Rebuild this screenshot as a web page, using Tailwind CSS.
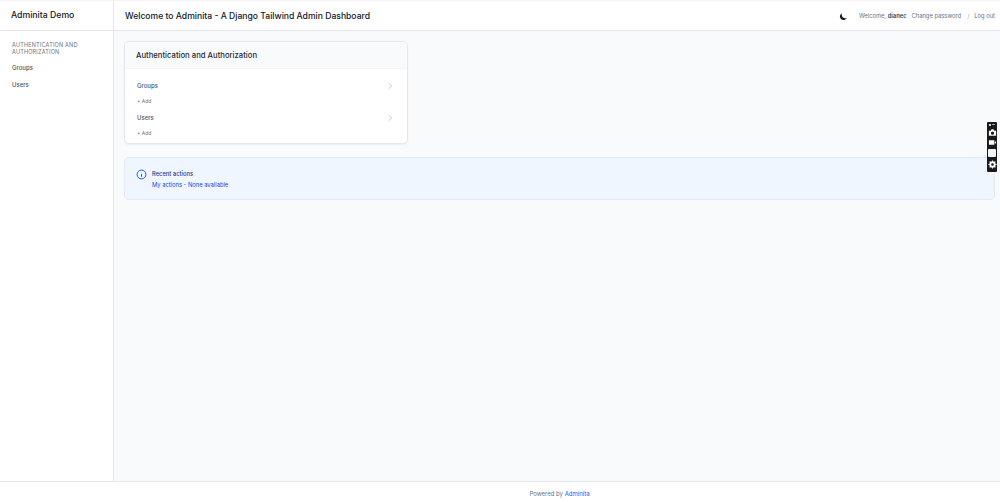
<!DOCTYPE html>
<html lang="en">
<head>
    <meta charset="UTF-8">
    <meta name="viewport" content="width=device-width, initial-scale=1.0">
    <title>Adminita Demo</title>
    <script src="https://cdn.jsdelivr.net/npm/@tailwindcss/browser@4"></script>
</head>
<body class="bg-white text-gray-800 font-['Inter',sans-serif] overflow-hidden">
    <div class="relative flex h-[502px] w-[1000px] flex-col border-t border-gray-100">
        <div class="flex min-h-0 flex-1">
            <aside class="w-[114px] shrink-0 border-r border-gray-200 bg-white">
                <div class="flex h-[30px] items-center border-b border-gray-200 pl-[11px] pt-[1px] text-[8.7px] font-medium text-gray-900">Adminita Demo</div>
                <nav class="pt-[11px] pl-[12px] pr-2">
                    <h3 class="text-[5.5px] leading-[7px] tracking-[0.2px] text-gray-500">AUTHENTICATION AND AUTHORIZATION</h3>
                    <a class="mt-[8px] block text-[6px] leading-[8px] font-medium text-gray-600">Groups</a>
                    <a class="mt-[10px] block -translate-y-[1px] text-[6px] leading-[8px] font-medium text-gray-600">Users</a>
                </nav>
            </aside>
            <div class="flex min-w-0 flex-1 flex-col bg-[#f9fafb]">
                <header class="flex h-[30px] shrink-0 items-center justify-between border-b border-gray-200 bg-white pl-[11px] pr-[5px] pt-[1px]">
                    <h1 class="text-[8.6px] font-medium text-gray-900">Welcome to Adminita - A Django Tailwind Admin Dashboard</h1>
                    <div class="flex items-center text-[5.8px] text-gray-500">
                        <svg class="mr-[11px] h-[9px] w-[9px] text-gray-900" viewBox="0 0 20 20" fill="currentColor"><path d="M17.3 13.3A8 8 0 0 1 6.7 2.7a8 8 0 1 0 10.6 10.6z"/></svg>
                        <span>Welcome, <strong class="font-semibold text-gray-700">dianec</strong></span>
                        <a class="ml-[5px]">Change password</a>
                        <span class="ml-[6px] mr-[5px] text-gray-400">/</span>
                        <a>Log out</a>
                    </div>
                </header>
                <main class="flex-1 pl-[10px] pr-[5px] pt-[10px]">
                    <section class="w-[284px] overflow-hidden rounded-[5px] border border-gray-200 bg-white shadow-xs">
                        <div class="flex h-[27px] items-center border-b border-gray-100 bg-gray-50 px-[11px] pt-[1px] text-[7.7px] font-medium text-gray-800">Authentication and Authorization</div>
                        <div class="pl-[12px] pr-[13px] pt-[6px] pb-[4px]">
                            <div class="flex h-[21px] items-center justify-between text-[6px] font-medium text-gray-600">
                                <span>Groups</span>
                                <svg class="h-[8px] w-[8px] text-gray-500" viewBox="0 0 20 20" fill="none" stroke="currentColor" stroke-width="1"><path d="M7 3l7 7-7 7"/></svg>
                            </div>
                            <div class="h-[11px] text-[5px] leading-[11px] text-gray-500">+ Add</div>
                            <div class="flex h-[21px] items-center justify-between text-[6px] font-medium text-gray-600">
                                <span>Users</span>
                                <svg class="h-[8px] w-[8px] text-gray-500" viewBox="0 0 20 20" fill="none" stroke="currentColor" stroke-width="1"><path d="M7 3l7 7-7 7"/></svg>
                            </div>
                            <div class="h-[11px] text-[5px] leading-[11px] text-gray-500">+ Add</div>
                        </div>
                    </section>
                    <section class="mt-[13px] flex h-[43px] items-start rounded-[5px] border border-blue-100 bg-[#eff6ff] pl-[11px] pt-[11px]">
                        <svg class="mr-[5px] h-[11px] w-[11px] text-blue-600" viewBox="0 0 20 20" fill="none" stroke="currentColor" stroke-width="1.8"><circle cx="10" cy="10" r="8"/><path d="M10 9v5M10 6v.5"/></svg>
                        <div class="pt-[1px]">
                            <div class="text-[5.8px] leading-[8px] font-medium text-blue-900">Recent actions</div>
                            <div class="mt-[3px] text-[5.8px] leading-[8px] text-blue-700">My actions - None available</div>
                        </div>
                    </section>
                </main>
            </div>
        </div>
        <footer class="flex h-[21px] shrink-0 items-center justify-center border-t border-gray-200 bg-white pl-[119px] pt-[2px] text-[6px] text-gray-500">
            <span>Powered by <a class="text-blue-600">Adminita</a></span>
        </footer>
        <!-- screenshot extension toolbar sits over the page -->
        <div class="absolute left-[987px] top-[121px] flex h-[50px] w-[10px] flex-col items-center gap-[1px] rounded-[1px] bg-[#1a1a1a]">
            <div class="flex h-[5px] items-center gap-[1px]"><span class="h-[2px] w-[2px] bg-gray-300"></span><span class="h-[1px] w-[3px] bg-gray-400"></span></div>
            <svg class="h-[9px] w-[9px] text-white" viewBox="0 0 20 20" fill="currentColor"><path fill-rule="evenodd" d="M2 6h4l2-3h4l2 3h4v11H2zM10 8a3.5 3.5 0 1 0 0 7 3.5 3.5 0 0 0 0-7z"/></svg>
            <svg class="h-[9px] w-[9px] text-white" viewBox="0 0 20 20" fill="currentColor"><path d="M2 5h12v10H2zM15 9l3-2v6l-3-2z"/></svg>
            <div class="my-[1px] h-[8px] w-[8px] rounded-[1px] bg-gray-100"></div>
            <svg class="mt-[1px] h-[9px] w-[9px] text-white" viewBox="0 0 20 20" fill="none" stroke="currentColor" stroke-width="4"><circle cx="10" cy="10" r="5"/><path d="M10 1v3M10 16v3M1 10h3M16 10h3M3.6 3.6l2 2M14.4 14.4l2 2M3.6 16.4l2-2M14.4 5.6l2-2" stroke-width="2.5"/></svg>
        </div>
    </div>
</body>
</html>
